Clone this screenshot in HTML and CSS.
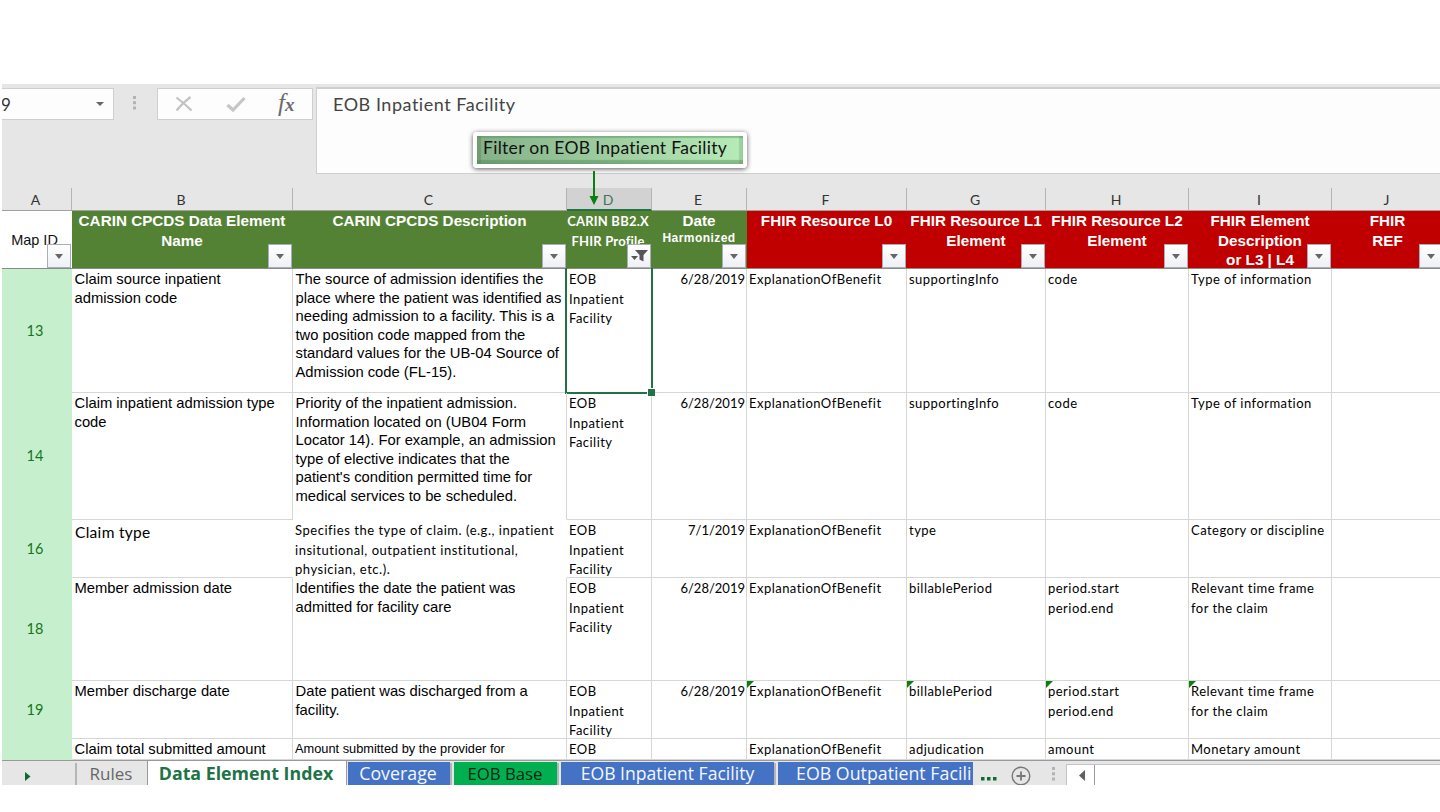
FILE: index.html
```
<!DOCTYPE html>
<html lang="en">
<head>
<meta charset="utf-8">
<title>Data Element Index</title>
<link rel="stylesheet" href="styles.css">
</head>
<body>
<main class="workbook">
  <section class="formula-area">
    <div class="name-box"><span>9</span><i class="arrow"></i></div>
    <svg class="dots" width="4" height="16" viewBox="0 0 4 16" fill="#b3b3b3"><path d="M0 1h3v3H0zM0 6.300h3v3H0zM0 11.600h3v3H0z"/></svg>
    <div class="actions">
      <svg width="18" height="16" viewBox="0 0 18 16" fill="none" stroke="#c3c3c3" stroke-width="2.200"><path d="M1.500 1.500C6 5 11 9 16.500 14.500M15.500 1C10 5 5.500 9.500 1.500 14.500"/></svg>
      <svg width="20" height="17" viewBox="0 0 20 17" fill="none" stroke="#c6c6c6" stroke-width="3.200"><path d="M1.500 9l5.500 5L18.500 2"/></svg>
      <span class="fx"><span class="fx-f">f</span><span class="fx-x">x</span></span>
    </div>
    <div class="formula">EOB Inpatient Facility</div>
    <div class="callout">Filter on EOB Inpatient Facility</div>
    <svg class="pointer" width="10" height="35" viewBox="0 0 10 35"><path d="M4 0h2v25h3.500L5 34 .5 25H4z" fill="#0a800f"/></svg>
  </section>

  <section class="sheet">
    <div class="row letters">
      <div>A</div><div>B</div><div>C</div><div class="on">D</div><div>E</div><div>F</div><div>G</div><div>H</div><div>I</div><div>J</div>
    </div>
    <div class="row heads">
      <div class="map">Map ID<b class="btn"><i class="arrow"></i></b></div>
      <div class="green">CARIN CPCDS Data Element<br>Name<b class="btn"><i class="arrow"></i></b></div>
      <div class="green">CARIN CPCDS Description<b class="btn"><i class="arrow"></i></b></div>
      <div class="green small">CARIN BB2.X<br>FHIR Profile<b class="btn"><svg width="17" height="14" viewBox="0 0 17 14" fill="#555"><path d="M4 1h13l-4.500 5v6.500l-4-2V6zM0 7h7l-3.500 4z"/></svg></b></div>
      <div class="green">Date<br><span class="harm">Harmonized</span><b class="btn"><i class="arrow"></i></b></div>
      <div class="red">FHIR Resource L0<b class="btn"><i class="arrow"></i></b></div>
      <div class="red">FHIR Resource L1<br>Element<b class="btn"><i class="arrow"></i></b></div>
      <div class="red">FHIR Resource L2<br>Element<b class="btn"><i class="arrow"></i></b></div>
      <div class="red">FHIR Element<br>Description<br>or L3 | L4<b class="btn"><i class="arrow"></i></b></div>
      <div class="red">FHIR<br>REF<b class="btn"><i class="arrow"></i></b></div>
    </div>
    <div class="row r13">
      <div class="id">13</div>
      <div class="arial">Claim source inpatient<br>admission code</div>
      <div class="arial">The source of admission identifies the<br>place where the patient was identified as<br>needing admission to a facility. This is a<br>two position code mapped from the<br>standard values for the UB-04 Source of<br>Admission code (FL-15).</div>
      <div class="selected">EOB<br>Inpatient<br>Facility</div>
      <div class="date">6/28/2019</div><div>ExplanationOfBenefit</div><div>supportingInfo</div><div>code</div><div>Type of information</div><div></div>
    </div>
    <div class="row r14">
      <div class="id">14</div>
      <div class="arial">Claim inpatient admission type<br>code</div>
      <div class="arial open-bottom">Priority of the inpatient admission.<br>Information located on (UB04 Form<br>Locator 14). For example, an admission<br>type of elective indicates that the<br>patient's condition permitted time for<br>medical services to be scheduled.</div>
      <div>EOB<br>Inpatient<br>Facility</div>
      <div class="date">6/28/2019</div><div>ExplanationOfBenefit</div><div>supportingInfo</div><div>code</div><div>Type of information</div><div></div>
    </div>
    <div class="row r16">
      <div class="id">16</div>
      <div class="large open-right">Claim type</div>
      <div class="open-bottom open-right describe">Specifies the type of claim. (e.g., inpatient<br>insitutional, outpatient institutional,<br>physician, etc.).</div>
      <div>EOB<br>Inpatient<br>Facility</div>
      <div class="date">7/1/2019</div><div>ExplanationOfBenefit</div><div>type</div><div></div><div>Category or discipline</div><div></div>
    </div>
    <div class="row r18">
      <div class="id">18</div>
      <div class="arial">Member admission date</div>
      <div class="arial">Identifies the date the patient was<br>admitted for facility care</div>
      <div>EOB<br>Inpatient<br>Facility</div>
      <div class="date">6/28/2019</div><div>ExplanationOfBenefit</div><div>billablePeriod</div><div>period.start<br>period.end</div><div>Relevant time frame<br>for the claim</div><div></div>
    </div>
    <div class="row r19">
      <div class="id">19</div>
      <div class="arial">Member discharge date</div>
      <div class="arial">Date patient was discharged from a<br>facility.</div>
      <div>EOB<br>Inpatient<br>Facility</div>
      <div class="date">6/28/2019</div><div class="flag">ExplanationOfBenefit</div><div class="flag">billablePeriod</div><div class="flag">period.start<br>period.end</div><div class="flag">Relevant time frame<br>for the claim</div><div></div>
    </div>
    <div class="row r20">
      <div class="id"></div>
      <div class="arial">Claim total submitted amount</div>
      <div class="arial narrow">Amount submitted by the provider for</div>
      <div>EOB</div>
      <div></div><div>ExplanationOfBenefit</div><div>adjudication</div><div>amount</div><div>Monetary amount</div><div></div>
    </div>
  </section>

  <nav class="tabs">
    <div class="nav"><svg width="6" height="9" viewBox="0 0 6 9"><path d="M0 0l5.500 4.500L0 9z" fill="#0f6b35"/></svg></div>
    <div class="tab rules">Rules</div>
    <div class="tab active">Data Element Index</div>
    <div class="tab blue t1">Coverage</div>
    <div class="tab base">EOB Base</div>
    <div class="tab blue t2">EOB Inpatient Facility</div>
    <div class="tab blue t3">EOB Outpatient Facili</div>
    <div class="tools">
      <svg width="16" height="4" viewBox="0 0 16 4" fill="#0f6b35"><path d="M0 0h3.500v3.500H0zM6 0h3.500v3.500H6zM12 0h3.500v3.500H12z"/></svg>
      <svg class="plus" width="20" height="20" viewBox="0 0 20 20" fill="none" stroke="#777"><circle cx="10" cy="10" r="8.800" stroke-width="1.400"/><path d="M5.500 10h9M10 5.500v9" stroke-width="1.800"/></svg>
      <svg class="tool-dots" width="4" height="16" viewBox="0 0 4 16" fill="#b3b3b3"><path d="M0 1h3v3H0zM0 6.300h3v3H0zM0 11.600h3v3H0z"/></svg>
    </div>
    <div class="scroll"><div class="left"><svg width="6" height="11" viewBox="0 0 6 11"><path d="M6 0v11L0 5.500z" fill="#606060"/></svg></div></div>
  </nav>
</main>
</body>
</html>
```
FILE: styles.css
```
* { box-sizing: border-box; }
body { margin: 0; background: #fff; overflow: hidden; }
.workbook { margin: 84px 0 0 2px; width: 1438px; height: 701px; overflow: hidden; background: #e6e6e6; color: #000; font-family: Lato, sans-serif; }
.arrow { display: block; border: 4.500px solid transparent; border-top: 5px solid #666; border-bottom: 0; }

.formula-area { position: relative; display: flex; align-items: flex-start; height: 104px; padding-top: 4px; }
.name-box { display: flex; align-items: center; justify-content: space-between; width: 112px; height: 32px; padding: 0 9px 0 0; border: 1px solid #cfcfcf; border-left: 0; background: #fdfdfd; font-size: 17px; color: #333; }
.name-box span { margin-left: -1px; }
.name-box .arrow { border-width: 4px 4px 0; margin-top: -1px; }
.dots { margin: 7px 20px 0 19px; }
.actions { display: flex; align-items: center; width: 156px; height: 32px; padding: 0 17px; gap: 33px; border: 1px solid #cfcfcf; background: #fdfdfd; }
.fx { display: flex; font: italic bold 22px/26px "Liberation Serif", serif; color: #6a6a6a; margin-left: -1px; }
.fx-f { font-weight: normal; font-size: 25px; }
.fx-x { font-size: 19px; padding-top: 2px; }
.formula { flex: 1; height: 87px; margin-left: 3px; padding: 1px 0 0 16px; border: solid #cfcfcf; border-width: 2px 0 1px 1px; margin-top: -1px; background: #fdfdfd; font-size: 18px; line-height: 28px; letter-spacing: .53px; color: #444; }
.callout { position: absolute; left: 471px; top: 48px; width: 274px; height: 36px; padding: 1px 0 0 6px; border: 4px solid #fff; border-radius: 4px; background: linear-gradient(90deg, #85b088, #b7ebb8); box-shadow: 0 1px 5px rgba(0,0,0,.65), inset 0 2px 1px rgba(90,145,95,.45), inset 0 -4px 1px rgba(75,130,80,.45), inset 4px 0 1px rgba(80,130,85,.4), inset -4px 0 1px rgba(100,165,105,.35); font-size: 17.500px; line-height: 22px; letter-spacing: .3px; color: #111; white-space: nowrap; }
.pointer { position: absolute; left: 587px; top: 87px; z-index: 2; }

.sheet { background: #fff; }
.row { display: grid; grid-template-columns: 70px 221px 274px 85px 95px 160px 139px 143px 143px 112px; overflow: hidden; }
.row > div { position: relative; overflow: hidden; padding: 1px 0 0 2px; border: solid #d6d6d6; border-width: 0 1px 1px 0; font-size: 13px; line-height: 19.500px; letter-spacing: .47px; white-space: nowrap; }

.letters { height: 23px; background: #e6e6e6; }
.letters > div { padding: 1px 2px 0 0; border-color: #b4b4b4; border-bottom-color: #a0a0a0; text-align: center; font-size: 14px; line-height: 21px; letter-spacing: 0; color: #333; }
.letters > .on { background: #d2d2d2; color: #3b755a; border-bottom: 2px solid #217346; }

.heads { height: 58px; }
.heads > div { padding: 0 1px 0 0; border-right: 0; border-bottom: 1px solid #8a8a8a; text-align: center; font: bold 15.250px/19.500px "Liberation Sans", sans-serif; letter-spacing: 0; color: #fff; }
.heads > .map { padding: 20px 5px 0 0; font-size: 14.500px; font-weight: normal; color: #111; }
.green { background: #548235; }
.red { background: #c00000; }
.heads > .small { font: bold 13px/20px Lato, sans-serif; letter-spacing: .2px; padding: 0 3px 0 0; }
.harm { display: block; margin-top: -2px; font-size: 12px; letter-spacing: .45px; }
.btn { position: absolute; right: 1px; bottom: 0; display: flex; align-items: center; justify-content: center; width: 24px; height: 24px; border: 1px solid #a9adb6; background: linear-gradient(#fff, #eef0f4); }

.r13 { height: 124px; }
.r14 { height: 127px; }
.r16 { height: 58px; }
.r18 { height: 103px; }
.r19 { height: 58px; }
.r20 { height: 21px; }
.row > .id { display: flex; align-items: center; justify-content: center; padding: 0 4px 1px 0; border: 0; background: #c6efce; color: #16761b; font-size: 14.500px; letter-spacing: 0; }
.row > .arial { padding: 1px 0 0 2.500px; font: 14.780px/18.600px "Liberation Sans", sans-serif; letter-spacing: 0; }
.row > .narrow { padding: 0 0 0 2px; font-size: 12.800px; line-height: 20px; }
.row > .large { padding: 2px 0 0 3px; font-size: 15.500px; line-height: 20px; letter-spacing: .3px; }
.row > .describe { letter-spacing: .53px; }
.row > .date { padding-right: 1px; text-align: right; letter-spacing: 0; }
.row > .open-bottom { border-bottom-color: transparent; }
.row > .open-right { border-right-color: transparent; }
.r13, .r13 > .selected { overflow: visible; }
.r13 > .selected::before { content: ""; position: absolute; inset: -1px -2px -2px -2px; border: 2px solid #217346; border-top: 0; }
.r13 > .selected::after { content: ""; position: absolute; right: -4px; bottom: -4px; width: 7px; height: 7px; z-index: 2; background: #217346; border: solid #fff; border-width: 1px 0 0 1px; }
.row > .flag::before { content: ""; position: absolute; left: 0; top: 0; border: solid transparent; border-width: 0 7px 7px 0; border-left: 0; border-top: 7px solid #0a800f; border-bottom: 0; }

.tabs { display: flex; height: 25px; border-top: 1px solid #999; background: #e6e6e6; }
.nav { width: 75px; height: 22px; margin-top: 2px; padding: 9px 0 0 23px; border-right: 2px solid #b5b5b5; line-height: 0; }
.tab { overflow: hidden; height: 24px; text-align: center; white-space: nowrap; font: 17.600px/25px "Open Sans", sans-serif; }
.rules { width: 71px; padding-right: 2px; color: #666; font-size: 17px; border-right: 1px solid #999; }
.active { width: 199px; padding-right: 2px; background: #fff; color: #217346; font-weight: bold; font-size: 17.800px; border-right: 1px solid #999; }
.blue { margin-top: 1px; background: #4472c4; color: #f4f7ff; line-height: 23px; }
.t1 { width: 102px; margin-left: 1px; padding-right: 2px; font-size: 17.800px; }
.base { width: 103px; margin: 1px 4px 0; padding-right: 1px; background: #00b050; color: #0b2614; font-size: 16.750px; line-height: 23px; }
.t2 { width: 213px; }
.t3 { width: 195px; margin-left: 4px; padding-left: 18px; text-align: left; font-size: 17.800px; }
.t1, .base, .t2 { box-shadow: 3px 0 0 -1px #b5b5b5; }
.tools { display: flex; width: 93px; padding: 5px 0 0 8px; }
.tools svg { flex: none; margin-top: 11px; }
.tools .plus { margin: 0 0 0 14px; }
.tools .tool-dots { margin: 0 0 0 21px; }
.scroll { flex: 1; margin-top: 3px; border-top: 1px solid #c4c4c4; border-left: 1px solid #c4c4c4; background: #fff; }
.left { width: 28px; height: 21px; padding: 5px 0 0 12px; line-height: 0; border-right: 1px solid #999; }
```
